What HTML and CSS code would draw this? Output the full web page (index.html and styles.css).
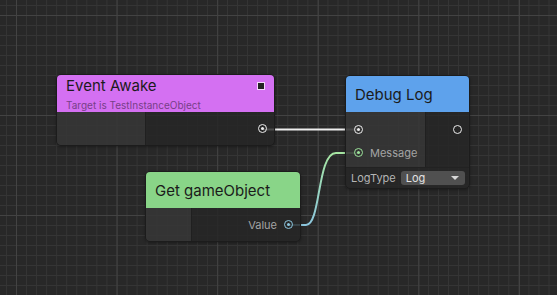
FILE: index.html
```html
<!DOCTYPE html>
<html lang="en">
<head>
    <meta charset="UTF-8">
    <title>Script Graph</title>
    <link rel="stylesheet" href="styles.css">
</head>
<body>
    <div class="canvas">
        <svg class="edges" width="557" height="295">
            <defs>
                <linearGradient id="valueEdge" gradientUnits="userSpaceOnUse" x1="0" y1="225" x2="0" y2="153">
                    <stop offset="0" stop-color="#8cc6de"/>
                    <stop offset="1" stop-color="#a6e6a2"/>
                </linearGradient>
            </defs>
            <line x1="263" y1="129.5" x2="358" y2="129.5" stroke="#eeeeee" stroke-width="2"/>
            <path d="M288 225 L306 225 C321 225 317 153 336 153 L358 153" fill="none" stroke="url(#valueEdge)" stroke-width="2"/>
        </svg>

        <div class="node event-awake">
            <div class="node-header">
                <div class="title-row">
                    <span class="title">Event Awake</span>
                    <span class="event-icon"></span>
                </div>
                <div class="subtitle">Target is TestInstanceObject</div>
            </div>
            <div class="node-body">
                <div class="inputs"></div>
                <div class="outputs">
                    <div class="port-row"><span class="port flow"></span></div>
                </div>
            </div>
        </div>

        <div class="node debug-log">
            <div class="node-header">
                <span class="title">Debug Log</span>
            </div>
            <div class="node-body">
                <div class="inputs">
                    <div class="port-row"><span class="port flow"></span></div>
                    <div class="port-row"><span class="port value-green"></span><span class="label">Message</span></div>
                </div>
                <div class="outputs">
                    <div class="port-row"><span class="port flow hollow"></span></div>
                </div>
            </div>
            <div class="node-field">
                <span class="label">LogType</span>
                <div class="dropdown"><span>Log</span><span class="caret"></span></div>
            </div>
        </div>

        <div class="node get-object">
            <div class="node-header">
                <span class="title">Get gameObject</span>
            </div>
            <div class="node-body">
                <div class="inputs"></div>
                <div class="outputs">
                    <div class="port-row"><span class="label">Value</span><span class="port value-blue"></span></div>
                </div>
            </div>
        </div>
    </div>
</body>
</html>
```

FILE: styles.css
```css
body {
    margin: 0;
    font-family: Inter, "Liberation Sans", sans-serif;
    background: #282828;
}

.canvas {
    position: relative;
    width: 557px;
    height: 295px;
    overflow: hidden;
    background-color: #282828;
    background-image:
        linear-gradient(to right, #434343 1px, transparent 1px),
        linear-gradient(to bottom, #434343 1px, transparent 1px),
        linear-gradient(to right, #353535 1px, transparent 1px),
        linear-gradient(to bottom, #353535 1px, transparent 1px);
    background-size: 100.6px 100%, 100% 100px, 10.06px 100%, 100% 10px;
    background-position: 16px 0, 0 15px, 6px 0, 0 5px;
}

.edges {
    position: absolute;
    left: 0;
    top: 0;
}

.node {
    position: absolute;
    display: flex;
    flex-direction: column;
    border: 1px solid #1c1c1c;
    border-radius: 5px;
    overflow: hidden;
    background: rgba(38, 38, 38, 0.82);
    box-shadow: 0 1px 3px rgba(0, 0, 0, 0.35);
}

.event-awake {
    left: 56px;
    top: 74px;
    width: 217px;
    height: 70px;
}

.debug-log {
    left: 345px;
    top: 75px;
    width: 123px;
    height: 112px;
}

.get-object {
    left: 145px;
    top: 171px;
    width: 154px;
    height: 69px;
}

.node-header {
    height: 36px;
    box-sizing: border-box;
    padding: 0 9px;
    display: flex;
    flex-direction: column;
    justify-content: center;
    color: #1b1b1b;
}

.event-awake .node-header {
    background: #d470f2;
    height: 37px;
    padding-top: 1px;
    justify-content: flex-start;
}

.debug-log .node-header {
    background: #5ea2ec;
}

.get-object .node-header {
    background: #89d588;
}

.title {
    font-size: 15px;
    line-height: 19px;
}

.title-row {
    display: flex;
    align-items: center;
    justify-content: space-between;
}

.event-icon {
    width: 6px;
    height: 6px;
    background: #232323;
    border: 1px solid #f4d6fb;
}

.subtitle {
    margin-top: 4px;
    font-size: 10px;
    line-height: 12px;
    color: #773f88;
}

.node-body {
    flex: 1;
    display: flex;
}

.inputs {
    background: rgba(72, 72, 72, 0.45);
    border-right: 1px solid #202020;
}

.event-awake .inputs {
    width: 88px;
}

.debug-log .inputs {
    width: 79px;
    padding-top: 6px;
}

.get-object .inputs {
    width: 45px;
}

.outputs {
    flex: 1;
    display: flex;
    flex-direction: column;
    justify-content: center;
    align-items: flex-end;
    padding-right: 7px;
}

.debug-log .outputs {
    justify-content: flex-start;
    padding-top: 6px;
}

.port-row {
    height: 23px;
    display: flex;
    align-items: center;
    gap: 7px;
}

.inputs .port-row {
    padding-left: 8px;
}

.label {
    font-size: 11px;
    color: #a4a4a4;
}

.port {
    position: relative;
    width: 9px;
    height: 9px;
    box-sizing: border-box;
    border-radius: 50%;
    border: 1.5px solid #ececec;
}

.port::after {
    content: "";
    position: absolute;
    left: 1.5px;
    top: 1.5px;
    width: 3px;
    height: 3px;
    border-radius: 50%;
    background: #ececec;
}

.port.hollow::after {
    display: none;
}

.port.value-green {
    border-color: #9be39a;
}

.port.value-green::after {
    background: #9be39a;
}

.port.value-blue {
    border-color: #8cc6de;
}

.port.value-blue::after {
    background: #8cc6de;
}

.node-field {
    height: 19px;
    display: flex;
    align-items: center;
    gap: 5px;
    padding: 0 4px 1px 5px;
    border-top: 1px solid #222;
}

.node-field .label {
    color: #b4b4b4;
}

.dropdown {
    flex: 1;
    height: 14px;
    border-radius: 3px;
    background: #505050;
    display: flex;
    align-items: center;
    justify-content: space-between;
    padding: 0 6px 0 5px;
    font-size: 11px;
    color: #e2e2e2;
}

.caret {
    width: 0;
    height: 0;
    border-left: 4px solid transparent;
    border-right: 4px solid transparent;
    border-top: 4px solid #d8d8d8;
}
```
